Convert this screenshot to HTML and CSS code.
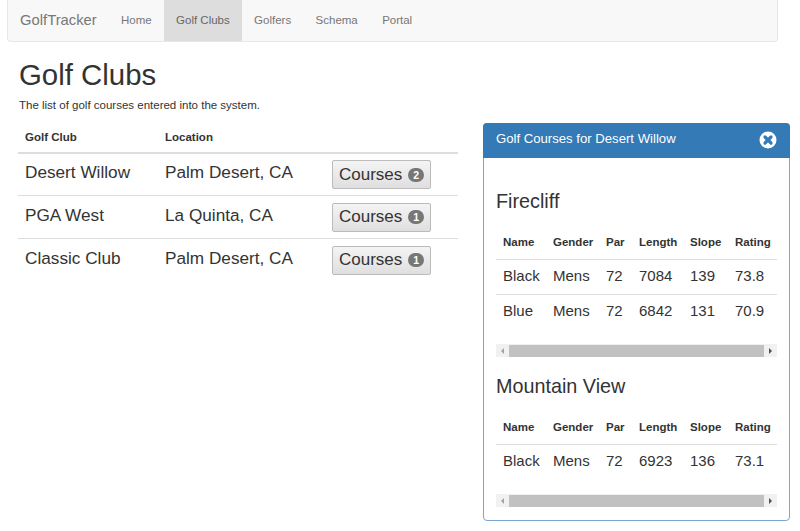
FILE: index.html
```html
<!DOCTYPE html>
<html lang="en">
<head>
    <meta charset="UTF-8">
    <title>GolfTracker</title>
    <link rel="stylesheet" href="styles.css">
</head>
<body>
    <nav class="navbar">
        <a class="brand">GolfTracker</a>
        <a class="nav-link">Home</a>
        <a class="nav-link active">Golf Clubs</a>
        <a class="nav-link">Golfers</a>
        <a class="nav-link">Schema</a>
        <a class="nav-link">Portal</a>
    </nav>

    <div class="page">
        <div class="left-col">
            <h1>Golf Clubs</h1>
            <p class="lead-text">The list of golf courses entered into the system.</p>
            <table class="clubs">
                <thead>
                    <tr>
                        <th class="col-club">Golf Club</th>
                        <th class="col-location">Location</th>
                        <th></th>
                    </tr>
                </thead>
                <tbody>
                    <tr>
                        <td>Desert Willow</td>
                        <td>Palm Desert, CA</td>
                        <td><button class="btn">Courses <span class="badge">2</span></button></td>
                    </tr>
                    <tr>
                        <td>PGA West</td>
                        <td>La Quinta, CA</td>
                        <td><button class="btn">Courses <span class="badge">1</span></button></td>
                    </tr>
                    <tr>
                        <td>Classic Club</td>
                        <td>Palm Desert, CA</td>
                        <td><button class="btn">Courses <span class="badge">1</span></button></td>
                    </tr>
                </tbody>
            </table>
        </div>

        <div class="panel">
            <div class="panel-heading">
                <span>Golf Courses for Desert Willow</span>
                <svg class="close-icon" width="18" height="18" viewBox="0 0 18 18">
                    <circle cx="9" cy="9" r="8.5" fill="#fff"/>
                    <path d="M6 6l6 6M12 6l-6 6" stroke="#337ab7" stroke-width="3.2" stroke-linecap="round"/>
                </svg>
            </div>
            <div class="panel-body">
                <h3>Firecliff</h3>
                <table class="courses">
                    <thead>
                        <tr><th>Name</th><th>Gender</th><th>Par</th><th>Length</th><th>Slope</th><th>Rating</th></tr>
                    </thead>
                    <tbody>
                        <tr><td>Black</td><td>Mens</td><td>72</td><td>7084</td><td>139</td><td>73.8</td></tr>
                        <tr><td>Blue</td><td>Mens</td><td>72</td><td>6842</td><td>131</td><td>70.9</td></tr>
                    </tbody>
                </table>
                <div class="scrollbar">
                    <span class="arrow arrow-left"></span>
                    <span class="thumb"></span>
                    <span class="arrow arrow-right"></span>
                </div>

                <h3>Mountain View</h3>
                <table class="courses">
                    <thead>
                        <tr><th>Name</th><th>Gender</th><th>Par</th><th>Length</th><th>Slope</th><th>Rating</th></tr>
                    </thead>
                    <tbody>
                        <tr><td>Black</td><td>Mens</td><td>72</td><td>6923</td><td>136</td><td>73.1</td></tr>
                    </tbody>
                </table>
                <div class="scrollbar">
                    <span class="arrow arrow-left"></span>
                    <span class="thumb"></span>
                    <span class="arrow arrow-right"></span>
                </div>
            </div>
        </div>
    </div>
</body>
</html>
```

FILE: styles.css
```css
* {
    box-sizing: border-box;
}

body {
    margin: 0;
    font-family: "Liberation Sans", Arial, sans-serif;
    font-size: 11.5px;
    color: #333;
    background-color: #fff;
}

.navbar {
    display: flex;
    align-items: stretch;
    height: 42px;
    margin: 0 22px 0 7px;
    padding-left: 12px;
    background-color: #f8f8f8;
    border: 1px solid #e7e7e7;
    border-top: none;
    border-radius: 0 0 4px 4px;
}

.brand {
    display: flex;
    align-items: center;
    width: 88.8px;
    padding-bottom: 2px;
    font-size: 14.8px;
    color: #777;
}

.nav-link {
    display: flex;
    align-items: center;
    padding: 0 12.2px 2px;
    color: #777;
}

.nav-link.active {
    color: #666;
    background-color: #ddd;
}

.page {
    display: flex;
    align-items: flex-start;
    padding-left: 18px;
}

.left-col {
    width: 440px;
    margin-right: 25px;
}

h1 {
    margin: 16px 0 0 1px;
    font-size: 29.4px;
    font-weight: 400;
    line-height: 33px;
}

.lead-text {
    margin: 7px 0 0 1px;
    line-height: 14px;
}

.clubs {
    width: 100%;
    margin-top: 6px;
    border-collapse: collapse;
}

.clubs th {
    height: 35px;
    padding: 4px 7px 0;
    font-size: 11.5px;
    text-align: left;
    border-bottom: 2px solid #ddd;
}

.clubs td {
    height: 42.8px;
    padding: 0 7px 4px;
    font-size: 17.2px;
    border-bottom: 1px solid #ddd;
}

.clubs tr:last-child td {
    border-bottom: none;
}

.col-club {
    width: 140px;
}

.col-location {
    width: 167px;
}

.btn {
    display: flex;
    align-items: center;
    width: 99px;
    height: 29px;
    margin-top: 4px;
    padding: 0 6px;
    font-family: inherit;
    font-size: 17px;
    color: #333;
    white-space: nowrap;
    background: linear-gradient(to bottom, #f4f4f4, #dfdfdf);
    border: 1px solid #bbb;
    border-radius: 2px;
}

.badge {
    width: 16px;
    height: 14px;
    margin-left: 6px;
    font-size: 10.5px;
    font-weight: 700;
    line-height: 14px;
    text-align: center;
    color: #fff;
    background-color: #777;
    border-radius: 7px;
}

.panel {
    width: 307px;
    height: 398px;
    margin-top: 81px;
    border: 1px solid #7aa7d2;
    border-radius: 4px;
}

.panel-heading {
    display: flex;
    align-items: center;
    justify-content: space-between;
    height: 35px;
    margin: -1px -1px 0;
    padding: 0 13px 5px 13px;
    font-size: 13.15px;
    color: #fff;
    background-color: #337ab7;
    border-radius: 4px 4px 0 0;
}

.close-icon {
    margin-top: 3px;
}

.panel-body {
    padding: 0 12px;
}

h3 {
    margin: 0;
    font-size: 19.8px;
    font-weight: 400;
    line-height: 22px;
}

.panel-body h3:first-child {
    margin-top: 32px;
}

.courses {
    width: 100%;
    margin-top: 14px;
    border-collapse: collapse;
    table-layout: fixed;
}

.courses th {
    height: 33px;
    padding: 0 7px;
    font-size: 11.5px;
    text-align: left;
    white-space: nowrap;
    border-bottom: 1px solid #ddd;
}

.courses td {
    height: 35px;
    padding: 0 7px 2px;
    font-size: 15px;
    border-bottom: 1px solid #ddd;
}

.courses tr:last-child td {
    border-bottom: none;
}

.courses th:nth-child(1) { width: 50px; }
.courses th:nth-child(2) { width: 53px; }
.courses th:nth-child(3) { width: 33px; }
.courses th:nth-child(4) { width: 51px; }
.courses th:nth-child(5) { width: 45px; }
.courses th:nth-child(6) { width: 49px; }

.scrollbar {
    display: flex;
    align-items: center;
    height: 13px;
    margin: 15px 0 18px;
    background-color: #f1f1f1;
}

.thumb {
    flex: 1;
    height: 12px;
    background-color: #c1c1c1;
}

.arrow {
    display: flex;
    justify-content: center;
    width: 13px;
}

.arrow::before {
    content: "";
    border-top: 3px solid transparent;
    border-bottom: 3px solid transparent;
}

.arrow-left::before {
    border-right: 3px solid #a3a3a3;
}

.arrow-right::before {
    border-left: 3px solid #505050;
}
```
